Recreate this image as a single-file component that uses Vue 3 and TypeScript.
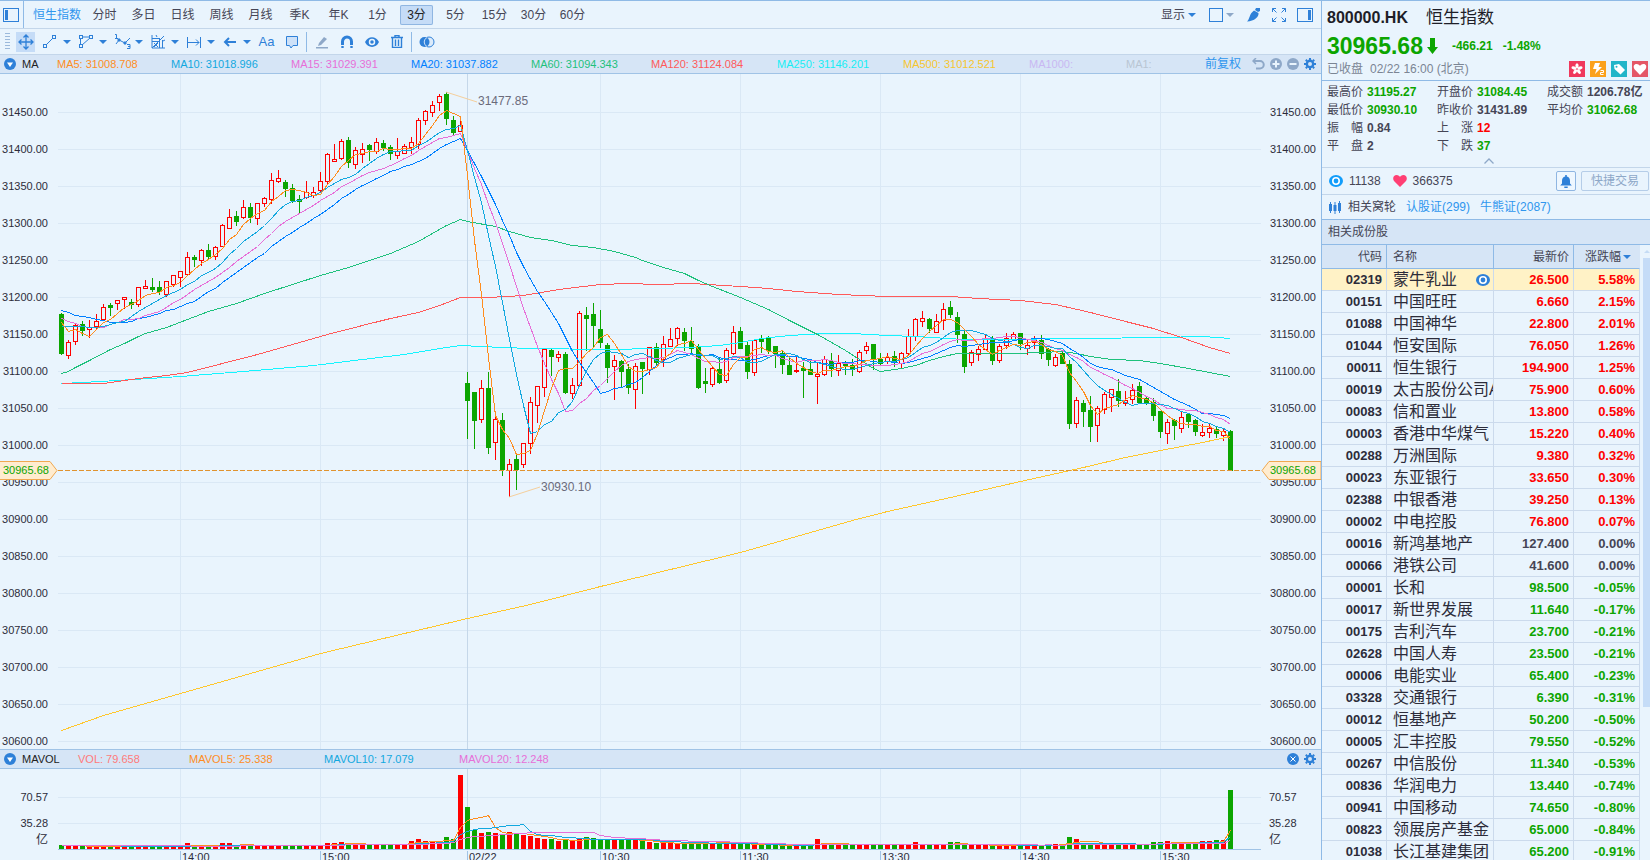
<script setup lang="ts">
import { computed, onBeforeUnmount, onMounted, ref } from 'vue'

type Dir = 'g' | 'r'
interface Candle { dir: Dir; top: number; bottom: number; high: number; low: number }

const periods = ['分时', '多日', '日线', '周线', '月线', '季K', '年K', '1分', '3分', '5分', '15分', '30分', '60分']
const activePeriod = ref('3分')

const maLabels = [
  { name: 'MA5', value: '31008.708', color: '#ff8d1e', size: 's' },
  { name: 'MA10', value: '31018.996', color: '#12a8df', size: 'm' },
  { name: 'MA15', value: '31029.391', color: '#e76fd8', size: 'm' },
  { name: 'MA20', value: '31037.882', color: '#007fff', size: 'm' },
  { name: 'MA60', value: '31094.343', color: '#1ec17c', size: 'm' },
  { name: 'MA120', value: '31124.084', color: '#ff5a5a', size: 'l' },
  { name: 'MA250', value: '31146.201', color: '#14eef5', size: 'l' },
  { name: 'MA500', value: '31012.521', color: '#f7c52e', size: 'l' },
  { name: 'MA1000', value: '', color: '#c9b8f2', size: 'n' },
  { name: 'MA1', value: '', color: '#b9c5d3', size: 'e' },
]
const volLabels = [
  { name: 'VOL', value: '79.658', color: '#ff7a7a', size: 's' },
  { name: 'MAVOL5', value: '25.338', color: '#ff8d1e', size: 'x' },
  { name: 'MAVOL10', value: '17.079', color: '#12a8df', size: 'x' },
  { name: 'MAVOL20', value: '12.248', color: '#e76fd8', size: 'x' },
]

const stats = [
  { label: '最高价', value: '31195.27', tone: 'down' },
  { label: '开盘价', value: '31084.45', tone: 'down' },
  { label: '成交额', value: '1206.78亿', tone: 'flat' },
  { label: '最低价', value: '30930.10', tone: 'down' },
  { label: '昨收价', value: '31431.89', tone: 'flat' },
  { label: '平均价', value: '31062.68', tone: 'down' },
  { label: '振幅', value: '0.84', tone: 'flat' },
  { label: '上涨', value: '12', tone: 'up' },
  { label: '', value: '', tone: 'flat' },
  { label: '平盘', value: '2', tone: 'flat' },
  { label: '下跌', value: '37', tone: 'down' },
]

const stocks = `02319 蒙牛乳业 26.500 5.58
00151 中国旺旺 6.660 2.15
01088 中国神华 22.800 2.01
01044 恒安国际 76.050 1.26
00011 恒生银行 194.900 1.25
00019 太古股份公司A 75.900 0.60
00083 信和置业 13.800 0.58
00003 香港中华煤气 15.220 0.40
00288 万洲国际 9.380 0.32
00023 东亚银行 33.650 0.30
02388 中银香港 39.250 0.13
00002 中电控股 76.800 0.07
00016 新鸿基地产 127.400 0.00
00066 港铁公司 41.600 0.00
00001 长和 98.500 -0.05
00017 新世界发展 11.640 -0.17
00175 吉利汽车 23.700 -0.21
02628 中国人寿 23.500 -0.21
00006 电能实业 65.400 -0.23
03328 交通银行 6.390 -0.31
00012 恒基地产 50.200 -0.50
00005 汇丰控股 79.550 -0.52
00267 中信股份 11.340 -0.53
00836 华润电力 13.440 -0.74
00941 中国移动 74.650 -0.80
00823 领展房产基金 65.000 -0.84
01038 长江基建集团 65.200 -0.91`.split('\n').map((line) => {
  const [code, name, price, change] = line.split(' ')
  const n = Number(change)
  return { code, name, price, change: change + '%', tone: n > 0 ? 'up' : n < 0 ? 'down' : 'flat' }
})

// Candles: direction, body top, body bottom, high, low. Levels count downwards, 2.22 per index point.
const candleText = `g 703 821 700 824;r 787 826 781 836;r 734 784 730 794;g 733 752 724 767;r 740 748 720 773;r 722 738 702 746
r 682 718 672 724;g 676 683 670 707;r 661 670 661 689;r 652 658 652 686;g 667 675 657 686;r 622 673 622 680
r 619 625 600 628;g 622 629 595 636;g 622 635 603 644;r 604 643 604 650;r 586 613 586 621;r 574 592 574 620
r 532 583 516 583;g 532 539 525 560;r 511 541 507 557;g 511 530 492 536;r 502 529 499 539;r 436 499 432 499
r 412 445 387 445;g 409 425 393 437;r 382 412 360 418;g 381 413 368 429;r 370 415 370 434;r 355 370 351 381
r 301 358 279 372;r 295 304 270 310;g 307 326 300 350;g 324 362 312 368;g 357 365 345 402;r 337 352 303 356
r 336 346 321 353;r 304 331 276 340;r 223 304 219 312;r 238 244 192 246;r 184 235 177 240;g 181 248 171 263
r 211 253 201 266;r 208 223 189 248;g 196 211 191 242;r 187 214 174 221;g 190 203 180 214;g 202 221 195 239
r 214 226 175 236;r 199 220 192 222;r 187 202 171 222;r 121 193 114 206;r 94 121 90 134;r 76 97 63 110
r 49 67 42 92;g 43 116 37 134;g 121 158 109 167;r 136 154 121 156;g 909 963 876 1077;g 936 1023 936 1106
r 925 1018 900 1028;g 924 1103 876 1121;r 1018 1087 1006 1140;g 1020 1171 1000 1187;r 1153 1169 1137 1252;g 1137 1170 1122 1230
r 1090 1153 1090 1163;r 967 1090 951 1122;r 919 976 919 1028;r 808 922 808 951;g 810 831 804 888;r 823 832 813 845
g 822 938 817 942;r 916 940 895 956;r 700 914 693 914;g 705 717 681 813;g 702 738 669 803;g 747 789 690 805
g 795 864 790 908;r 841 859 825 960;g 843 876 840 922;g 867 924 852 942;r 859 926 850 987;g 846 867 846 942
r 802 868 801 884;g 801 849 790 858;r 793 838 768 860;r 778 797 744 801;r 745 773 741 797;g 756 783 744 813
g 783 807 741 822;g 798 923 792 927;g 903 912 864 939;r 865 911 860 921;g 867 909 834 912;r 811 899 805 908
r 757 818 738 824;g 753 807 741 807;g 795 876 787 897;r 781 875 778 887;g 777 786 765 819;g 774 813 769 822
g 798 822 798 864;g 819 854 813 882;g 855 885 834 885;r 870 873 830 879;g 864 873 846 953;g 867 885 840 885
r 883 889 845 972;r 838 883 828 888;g 843 867 819 891;r 850 871 826 888;g 846 858 842 884;g 855 870 838 888
r 817 874 810 879;r 799 811 786 822;g 792 837 792 869;g 837 852 820 854;r 832 844 820 852;g 828 847 813 861
r 820 850 816 864;r 769 820 747 829;r 718 768 714 783;r 715 722 693 741;g 717 747 714 760;r 724 755 702 758
r 688 721 669 750;g 681 705 663 715;g 711 764 696 789;g 762 861 752 879;r 817 847 810 858;r 808 823 799 843
r 778 806 765 810;g 775 842 768 855;r 799 841 793 849;r 775 796 759 806;r 763 778 756 781;g 759 793 759 810
r 796 803 780 825;r 781 787 768 807;g 780 821 765 837;g 807 840 805 858;r 832 854 822 861;g 820 852 814 852
g 852 1031 840 1047;r 961 1028 951 1043;g 969 995 960 1041;g 990 1041 948 1086;r 985 1036 978 1086;r 943 986 936 1002
r 928 952 928 996;g 933 963 897 982;r 961 968 933 977;r 931 958 912 972;g 918 968 906 972;g 954 968 948 976
g 966 1007 954 1023;g 993 1056 993 1074;r 1027 1058 1018 1092;g 1020 1038 1017 1080;r 1012 1043 996 1059;g 1002 1026 1002 1043
g 1020 1056 1017 1067;r 1057 1064 1032 1071;r 1043 1055 1028 1073;g 1048 1061 1038 1073;r 1054 1064 1043 1083;g 1053 1173 1050 1173`
const candles: Candle[] = candleText.split(/[;\n]/).map((c) => {
  const [dir, top, bottom, high, low] = c.trim().split(' ')
  return { dir: dir as Dir, top: +top, bottom: +bottom, high: +high, low: +low }
})
const closes = candles.map((c) => (c.dir === 'r' ? c.top : c.bottom))

const volumes = `4 4 3 3 3 3 3 3 3 3 3 3 3 3 3 3 3 3 6 3 3 3 3 6 6 4 4 4 4 4 4 4 4 4 4 4 4 4 6 6 7 5 5 5 5 5 5 5 5 5 8 10 8 8 8 12 10 74
42 19 16 17 16 15 17 16 14 13 11 10 10 8 9 9 10 12 11 10 9 10 10 9 10 8 7 6 6 7 6 5 6 8 7 6 6 6 6 5 5 5 4 4 5 4 3 3 5 5 10 5 5 5 5 5 4 4 5 5
5 4 5 4 7 4 4 5 5 7 7 4 4 4 5 4 4 3 5 3 3 4 4 5 5 5 12 10 6 6 4 5 6 4 5 4 5 5 7 7 8 7 7 6 6 8 8 9 9 59`
  .split(/\s+/).map(Number)

function movingAverage(values: number[], n: number, lead: number[]): number[] {
  return values.map((_, i) =>
    i < n - 1 ? lead[Math.min(i, lead.length - 1)] : values.slice(i - n + 1, i + 1).reduce((a, b) => a + b, 0) / n)
}
const shortLines = [
  { color: '#007fff', v: movingAverage(closes, 20, [691, 697, 704, 707, 711, 716, 721, 725, 727, 727, 724, 715, 710, 704, 698, 691, 686, 679, 670]) },
  { color: '#e76fd8', v: movingAverage(closes, 15, [715, 723, 730, 737, 740, 741, 740, 732, 726, 718, 716, 713, 704, 699]) },
  { color: '#12a8df', v: movingAverage(closes, 10, [739, 739, 737, 739, 740, 740, 739, 731, 727]) },
  { color: '#ff8d1e', v: movingAverage(closes, 5, [727, 752, 746, 760]) },
]
// Slow averages as "index level" knots.
const slowLines = [
  { color: '#ffc72e', k: '0 1951 6 1904 17 1840 37 1720 58 1613 67 1572 77 1518 97 1415 113 1320 118 1292 127 1250 137 1202 146 1160 152 1132 157 1111 163 1085 167 1069' },
  { color: '#14f4ff', k: '0 910 3 907 8 900 17 887 26 872 36 854 43 837 49 821 54 803 57 796 63 801 67 805 78 806 85 805 90 802 94 796 97 786 100 774 104 766 109 758 113 758 118 764 122 769 129 776 133 777 146 775 157 770 163 769 167 773' },
  { color: '#ff5a5a', k: '0 908 3 908 5 910 6 910 9 901 11 894 15 884 18 875 23 850 28 823 33 793 38 763 43 736 47 715 51 695 54 675 57 652 61 652 66 645 71 626 77 613 81 610 85 612 90 610 97 617 101 624 105 632 111 641 118 647 122 647 127 647 131 654 137 661 142 673 147 697 152 723 156 743 160 772 164 801 167 820' },
  { color: '#1ec17c', k: '0 878 1 873 2 862 4 839 7 806 9 790 11 769 12 760 15 741 18 716 21 694 25 670 29 640 33 611 37 584 41 561 44 540 47 518 51 482 55 436 57 418 58 423 62 438 64 454 67 472 70 480 73 495 76 501 79 514 82 532 83 541 86 562 89 579 91 599 93 618 97 650 101 686 104 719 108 763 112 811 114 837 116 863 117 874 118 870 120 865 122 855 124 841 126 829 128 819 133 818 136 820 140 815 143 813 145 819 147 828 150 836 154 840 157 850 161 865 164 876 167 887' },
]
const volLines = [
  { color: '#ff8d1e', v: movingAverage(volumes, 5, [4]) },
  { color: '#12a8df', v: movingAverage(volumes, 10, [4]) },
  { color: '#e76fd8', v: movingAverage(volumes, 20, [4]) },
]

const priceTicks = Array.from({ length: 18 }, (_, i) => 31450 - i * 50)
const timeTicks = [
  { i: 17, t: '14:00' }, { i: 37, t: '15:00' }, { i: 58, t: '02/22', day: true }, { i: 77, t: '10:30' },
  { i: 97, t: '11:30' }, { i: 117, t: '13:30' }, { i: 137, t: '14:30' }, { i: 157, t: '15:30' },
]
const volTicks = [{ v: 52, t: '70.57' }, { v: 26, t: '35.28' }]

const plot = ref<HTMLElement | null>(null)
const W = ref(1321)
const H = ref(675)
let observer: ResizeObserver | undefined
function measure() {
  if (!plot.value) return
  W.value = plot.value.clientWidth
  H.value = plot.value.clientHeight
}
onMounted(() => {
  measure()
  observer = new ResizeObserver(measure)
  if (plot.value) observer.observe(plot.value)
})
onBeforeUnmount(() => observer?.disconnect())

const HEADROOM = 18
const LEVELS = 2025
const step = computed(() => (W.value - 152) / (candles.length - 1))
const cx = (i: number) => Math.round(61 + i * step.value)
const ly = (level: number) => Math.round(((level + HEADROOM) * H.value) / LEVELS)
const py = (price: number) => ly(97 + (31450 - price) * 2.22)
const right = computed(() => W.value - 60)
const last = computed(() => ly(1171))
const points = (values: number[]) => values.map((v, i) => `${cx(i) + 0.5},${ly(v) + 0.5}`).join(' ')
const knotPoints = (k: string) => {
  const n = k.split(' ').map(Number)
  const out: string[] = []
  for (let j = 0; j < n.length; j += 2) out.push(`${cx(n[j]) + 0.5},${ly(n[j + 1]) + 0.5}`)
  return out.join(' ')
}
const VOL_BASE = 80
const volPoints = (values: number[]) => values.map((v, i) => `${cx(i) + 0.5},${Math.round(VOL_BASE - v) + 0.5}`).join(' ')
</script>

<template>
  <div class="app">
    <main class="main">
      <nav class="tabs">
        <button class="icon-btn side-toggle" aria-label="侧栏">
          <svg width="16" height="14" viewBox="0 0 16 14"><rect x=".5" y=".5" width="15" height="13" fill="none" stroke="#2e80d8" /><rect x="2" y="2" width="3" height="10" fill="#2e80d8" /></svg>
        </button>
        <a href="#" class="index-link">恒生指数</a>
        <button v-for="p in periods" :key="p" class="period" :class="{ on: p === activePeriod }" @click="activePeriod = p">{{ p }}</button>
        <div class="tabs-right">
          <button class="menu-btn">显示<i class="caret"></i></button>
          <button class="menu-btn" aria-label="布局"><svg width="14" height="14" viewBox="0 0 14 14"><rect x=".5" y=".5" width="13" height="13" fill="none" stroke="#2e80d8" /></svg><i class="caret dim"></i></button>
          <button class="icon-btn" aria-label="画笔"><svg width="14" height="14" viewBox="0 0 14 14" fill="#2e80d8"><path d="M9 0h4v3l-2 1-3-2z" /><path d="M7 2.500l4.500 2.500c.5 4-4 8-11.500 8.500C3 11 2 6 7 2.500z" /></svg></button>
          <button class="icon-btn" aria-label="全屏"><svg width="14" height="14" viewBox="0 0 14 14" fill="none" stroke="#2e80d8"><path d="M.5 4V.5H4M.5.5l4 4M10 .5h3.500V4M13.500.5l-4 4M.5 10v3.500H4M.5 13.500l4-4M10 13.500h3.500V10M13.500 13.500l-4-4" /></svg></button>
          <button class="icon-btn" aria-label="右栏"><svg width="16" height="14" viewBox="0 0 16 14"><rect x=".5" y=".5" width="15" height="13" fill="none" stroke="#2e80d8" /><rect x="11" y="2" width="3" height="10" fill="#2e80d8" /></svg></button>
        </div>
      </nav>

      <div class="tools">
        <i class="grip"></i>
        <button class="tool on" aria-label="移动"><svg width="16" height="16" viewBox="0 0 16 16" fill="none" stroke="#2e80d8" stroke-width="1.300"><path d="M8 1v14M1 8h14M5.500 3.500L8 1l2.500 2.500M5.500 12.500L8 15l2.500-2.500M3.500 5.500L1 8l2.500 2.500M12.500 5.500L15 8l-2.500 2.500" /></svg></button>
        <button class="group" aria-label="线段"><svg width="16" height="16" viewBox="0 0 16 16" fill="none" stroke="#2e80d8"><path d="M4 11l7-7" /><rect x="1.500" y="10.500" width="3" height="3" /><rect x="10.500" y="1.500" width="3" height="3" /></svg><i class="caret"></i></button>
        <button class="group" aria-label="多边形"><svg width="16" height="16" viewBox="0 0 16 16" fill="none" stroke="#2e80d8"><path d="M4 3h8M2.500 5v6M4 11l8-7" /><rect x="1.500" y="1.500" width="3" height="3" /><rect x="11.500" y="1.500" width="3" height="3" /><rect x="1.500" y="10.500" width="3" height="3" /></svg><i class="caret"></i></button>
        <button class="group" aria-label="波浪"><svg width="18" height="17" viewBox="0 0 18 17" fill="none" stroke="#2e80d8"><path d="M1 1.500h1.500v4M1 5.500h3M2 11l3-4 6 3 5-5M13 11.500h3v4h-3M14 13.500h2" /><path d="M4 6h2v2H4zM10 9h2v2h-2z" fill="#2e80d8" /></svg><i class="caret"></i></button>
        <button class="group" aria-label="江恩"><svg width="16" height="16" viewBox="0 0 16 16" fill="none" stroke="#2e80d8"><path d="M2 1v13h13M2 4.500h8M2 7.500h8M9.500 14V4M12.500 14V6M2 14L14 2" /><path d="M6 1l1 2M15 6l-2 1M4 9l4 4M8 9l-4 4" /></svg><i class="caret"></i></button>
        <button class="group" aria-label="测量"><svg width="16" height="16" viewBox="0 0 16 16" fill="none" stroke="#2e80d8"><path d="M1.500 3v11M14.500 3v11M2 8.500h11M10 5.500l3 3-3 3" /></svg><i class="caret"></i></button>
        <button class="group" aria-label="箭头"><svg width="16" height="16" viewBox="0 0 16 16" fill="none" stroke="#2e80d8" stroke-width="2"><path d="M3 8h11M7 4L3 8l4 4" /></svg><i class="caret"></i></button>
        <button class="single text-tool">Aa</button>
        <button class="single" aria-label="注释"><svg width="14" height="14" viewBox="0 0 14 14" fill="#cde1f8" stroke="#2e80d8"><path d="M1.500 1.500h11v9H8l-2 2.500-1.500-2.500h-3z" /></svg></button>
        <i class="bar"></i>
        <button class="single" aria-label="铅笔"><svg width="14" height="14" viewBox="0 0 14 14" fill="#8ea8c8"><path d="M9 2l3 2-6 6-3 1 1-3zM1 12h12v1.500H1z" /></svg></button>
        <button class="single" aria-label="磁铁"><svg width="14" height="14" viewBox="0 0 14 14" fill="none" stroke="#2e80d8" stroke-width="3"><path d="M2.500 10V6.500a4.500 4.500 0 0 1 9 0V10" /><path d="M2.500 11v2M11.500 11v2" stroke-width="2.400" /></svg></button>
        <button class="single" aria-label="显示"><svg width="14" height="12" viewBox="0 0 14 12"><path d="M0 6c3-6.500 11-6.500 14 0-3 6.500-11 6.500-14 0z" fill="#2e80d8" /><circle cx="7" cy="6" r="2.500" fill="#2e80d8" stroke="#e9f4fd" stroke-width="1.500" /></svg></button>
        <button class="single" aria-label="删除"><svg width="12" height="13" viewBox="0 0 12 13" fill="none" stroke="#2e80d8"><path d="M0 2.500h12M4 2V.5h4V2M1.500 3v9.500h9V3M4.500 4.500V11M7.500 4.500V11" stroke-width="1.400" /></svg></button>
        <i class="bar"></i>
        <button class="single" aria-label="叠加"><svg width="16" height="12" viewBox="0 0 16 12"><circle cx="10" cy="6" r="5" fill="#dcebfa" stroke="#2e80d8" /><circle cx="5.500" cy="6" r="5" fill="#2e80d8" /><path d="M8 1.500a5 5 0 0 0 0 9" fill="none" stroke="#cde1f8" /></svg></button>
      </div>

      <header class="strip">
        <button class="round" aria-label="收起"><svg width="12" height="12" viewBox="0 0 12 12"><circle cx="6" cy="6" r="6" fill="#2e80d8" /><path d="M3 4.500h6L6 9z" fill="#fff" /></svg></button>
        <span class="strip-name">MA</span>
        <span v-for="m in maLabels" :key="m.name" class="ma" :class="'w-' + m.size" :style="{ color: m.color }">{{ m.name }}: {{ m.value }}</span>
        <div class="strip-right">
          <a href="#" class="adjust">前复权</a>
          <button class="round" aria-label="撤销"><svg width="13" height="12" viewBox="0 0 13 12" fill="none" stroke="#8ea8c8" stroke-width="2"><path d="M2 3h6a3.700 3.700 0 0 1 0 7.500H4" /><path d="M4 0L1 3l3 3" stroke-width="1.500" /></svg></button>
          <button class="round" aria-label="放大"><svg width="12" height="12" viewBox="0 0 12 12"><circle cx="6" cy="6" r="6" fill="#8ea8c8" /><path d="M6 2.500v7M2.500 6h7" stroke="#e9f4fd" stroke-width="2" /></svg></button>
          <button class="round" aria-label="缩小"><svg width="12" height="12" viewBox="0 0 12 12"><circle cx="6" cy="6" r="6" fill="#8ea8c8" /><path d="M2.500 6h7" stroke="#e9f4fd" stroke-width="2" /></svg></button>
          <button class="round" aria-label="设置"><svg width="12" height="12" viewBox="0 0 12 12"><circle cx="6" cy="6" r="3.200" fill="none" stroke="#2e80d8" stroke-width="2.400" /><path d="M6 0v2M6 10v2M0 6h2M10 6h2M1.800 1.800l1.400 1.400M8.800 8.800l1.400 1.400M10.200 1.800L8.800 3.200M3.200 8.800l-1.400 1.400" stroke="#2e80d8" stroke-width="2" /></svg></button>
        </div>
      </header>

      <div ref="plot" class="plot">
        <svg class="chart" :width="W" :height="H">
          <g shape-rendering="crispEdges">
            <line v-for="p in priceTicks" :key="'h' + p" class="grid" x1="58" :x2="right" :y1="py(p) + 0.5" :y2="py(p) + 0.5" />
            <line v-for="t in timeTicks" :key="'v' + t.i" class="grid" :class="{ day: t.day }" :x1="cx(t.i) + 0.5" :x2="cx(t.i) + 0.5" y1="0" :y2="H" />
          </g>
          <g shape-rendering="crispEdges">
            <g v-for="(c, i) in candles" :key="i" :class="c.dir">
              <line :x1="cx(i) + 0.5" :x2="cx(i) + 0.5" :y1="ly(c.high)" :y2="ly(c.low)" />
              <rect v-if="c.dir === 'g'" :x="cx(i) - 2" :y="ly(c.top)" width="5" :height="Math.max(2, ly(c.bottom) - ly(c.top))" />
              <rect v-else :x="cx(i) - 1.5" :y="ly(c.top) + 0.5" width="4" :height="Math.max(1, ly(c.bottom) - ly(c.top))" />
            </g>
          </g>
          <g fill="none" shape-rendering="crispEdges">
            <polyline v-for="l in slowLines" :key="l.color" :stroke="l.color" :points="knotPoints(l.k)" />
            <polyline v-for="l in shortLines" :key="l.color" :stroke="l.color" :points="points(l.v)" />
            <line class="last" x1="58" :x2="right" :y1="last + 0.5" :y2="last + 0.5" />
          </g>
          <g class="callout">
            <line :x1="cx(55)" :y1="ly(36)" :x2="cx(55) + 31" :y2="ly(66)" />
            <text :x="cx(55) + 32" :y="ly(62) + 4">31477.85</text>
            <line :x1="cx(64)" :y1="ly(1252)" :x2="cx(64) + 31" :y2="ly(1222)" />
            <text :x="cx(64) + 32" :y="ly(1220) + 4">30930.10</text>
          </g>
          <g class="axis">
            <text v-for="p in priceTicks" :key="'l' + p" x="48" :y="py(p) + 4" text-anchor="end">{{ p.toFixed(2) }}</text>
            <text v-for="p in priceTicks" :key="'r' + p" :x="W - 51" :y="py(p) + 4">{{ p.toFixed(2) }}</text>
          </g>
          <g class="tag">
            <path :d="`M-1 ${last - 8.5}H50L57 ${last + 0.5}L50 ${last + 9.5}H-1Z`" />
            <text x="3" :y="last + 4">30965.68</text>
            <path :d="`M${W} ${last - 8.5}H${W - 52}L${W - 59} ${last + 0.5}L${W - 52} ${last + 9.5}H${W}Z`" />
            <text :x="W - 51" :y="last + 4">30965.68</text>
          </g>
        </svg>
      </div>

      <header class="strip vol-strip">
        <button class="round" aria-label="收起"><svg width="12" height="12" viewBox="0 0 12 12"><circle cx="6" cy="6" r="6" fill="#2e80d8" /><path d="M3 4.500h6L6 9z" fill="#fff" /></svg></button>
        <span class="strip-name wide">MAVOL</span>
        <span v-for="m in volLabels" :key="m.name" class="ma" :class="'w-' + m.size" :style="{ color: m.color }">{{ m.name }}: {{ m.value }}</span>
        <div class="strip-right">
          <button class="round" aria-label="关闭"><svg width="12" height="12" viewBox="0 0 12 12"><circle cx="6" cy="6" r="6" fill="#2e80d8" /><path d="M3.500 3.500l5 5M8.500 3.500l-5 5" stroke="#fff" /></svg></button>
          <button class="round" aria-label="设置"><svg width="12" height="12" viewBox="0 0 12 12"><circle cx="6" cy="6" r="3.200" fill="none" stroke="#2e80d8" stroke-width="2.400" /><path d="M6 0v2M6 10v2M0 6h2M10 6h2M1.800 1.800l1.400 1.400M8.800 8.800l1.400 1.400M10.200 1.800L8.800 3.200M3.200 8.800l-1.400 1.400" stroke="#2e80d8" stroke-width="2" /></svg></button>
        </div>
      </header>

      <div class="volume">
        <svg class="chart" :width="W" height="91">
          <g shape-rendering="crispEdges">
            <line v-for="t in volTicks" :key="t.t" class="grid" x1="58" :x2="right" :y1="VOL_BASE - t.v + 0.5" :y2="VOL_BASE - t.v + 0.5" />
            <line v-for="t in timeTicks" :key="'v' + t.i" class="grid" :class="{ day: t.day }" :x1="cx(t.i) + 0.5" :x2="cx(t.i) + 0.5" y1="0" :y2="VOL_BASE" />
            <rect v-for="(v, i) in volumes" :key="i" :fill="candles[i].dir === 'g' ? '#0ca500' : '#ff0000'" :x="cx(i) - 2" :y="VOL_BASE - v" width="5" :height="v" />
            <polyline v-for="l in volLines" :key="l.color" fill="none" :stroke="l.color" :points="volPoints(l.v)" />
            <line class="base" x1="58" :x2="right" :y1="VOL_BASE + 0.5" :y2="VOL_BASE + 0.5" />
            <line v-for="t in timeTicks" :key="'t' + t.i" class="base" :x1="cx(t.i) + 0.5" :x2="cx(t.i) + 0.5" y1="82" y2="91" />
          </g>
          <g class="axis">
            <text v-for="t in volTicks" :key="'a' + t.t" x="48" :y="VOL_BASE - t.v + 4" text-anchor="end">{{ t.t }}</text>
            <text v-for="t in volTicks" :key="'b' + t.t" :x="W - 52" :y="VOL_BASE - t.v + 4">{{ t.t }}</text>
            <text class="unit" x="48" y="75" text-anchor="end">亿</text>
            <text class="unit" :x="W - 52" y="75">亿</text>
            <text v-for="t in timeTicks" :key="'c' + t.i" class="time" :x="cx(t.i) + 2" y="92">{{ t.t }}</text>
          </g>
        </svg>
      </div>
    </main>

    <aside class="side">
      <section class="quote">
        <h1><b>800000.HK</b><span>恒生指数</span></h1>
        <div class="price down">
          <strong>30965.68</strong>
          <svg width="11" height="16" viewBox="0 0 11 16" fill="#0ca500"><path d="M3 0h5v9h3l-5.500 7L0 9h3z" /></svg>
          <b>-466.21</b><b>-1.48%</b>
        </div>
        <div class="status">
          <span>已收盘</span><span>02/22 16:00 (北京)</span>
          <div class="badges">
            <svg width="16" height="16" viewBox="0 0 16 16"><rect width="16" height="16" fill="#f0385c" /><g fill="#fff"><ellipse cx="8" cy="4.800" rx="1.600" ry="2.600" /><ellipse cx="8" cy="4.800" rx="1.600" ry="2.600" transform="rotate(72 8 8)" /><ellipse cx="8" cy="4.800" rx="1.600" ry="2.600" transform="rotate(144 8 8)" /><ellipse cx="8" cy="4.800" rx="1.600" ry="2.600" transform="rotate(216 8 8)" /><ellipse cx="8" cy="4.800" rx="1.600" ry="2.600" transform="rotate(288 8 8)" /></g></svg>
            <svg width="16" height="16" viewBox="0 0 16 16"><rect width="16" height="16" fill="#fba11b" /><path d="M5 2h5L8.500 6H12l-7 7 1.500-5H3z" fill="#fff" /><path d="M10.500 9.500h3v2h-3v2h3" fill="none" stroke="#fff" /></svg>
            <svg width="16" height="16" viewBox="0 0 16 16"><rect width="16" height="16" fill="#22b5c8" /><path d="M3 4l5-1 6 6-4.500 4.500L3.500 8z" fill="#fff" /><circle cx="5.500" cy="5.700" r="1" fill="#22b5c8" /></svg>
            <svg width="16" height="16" viewBox="0 0 16 16"><rect width="16" height="16" fill="#e45766" /><path d="M8 14L2.500 8.200C.8 5.500 2 3 4.500 3 6.500 3 7.500 4 8 5c.5-1 1.500-2 3.500-2C14 3 15.200 5.500 13.500 8.200z" fill="#fff" /></svg>
          </div>
        </div>
      </section>

      <section class="stats">
        <dl>
          <div v-for="(s, i) in stats" :key="i"><dt><span v-for="(ch, j) in s.label" :key="j">{{ ch }}</span></dt><dd :class="s.tone">{{ s.value }}</dd></div>
        </dl>
        <button class="fold" aria-label="折叠"><svg width="10" height="6" viewBox="0 0 10 6" fill="none" stroke="#8ea8c8" stroke-width="1.300"><path d="M.5 5.500L5 1l4.500 4.500" /></svg></button>
      </section>

      <section class="line social">
        <svg width="14" height="12" viewBox="0 0 14 12"><ellipse cx="7" cy="6" rx="7" ry="6" fill="#119dfb" /><circle cx="7" cy="6" r="3.200" fill="#119dfb" stroke="#fff" stroke-width="1.600" /></svg>
        <span>11138</span>
        <svg width="14" height="12" viewBox="0 0 14 12"><path d="M7 12L1 6C-1 3 1 0 3.500 0 5.500 0 6.500 1 7 2c.5-1 1.500-2 3.500-2C13 0 15 3 13 6z" fill="#ff3f74" /></svg>
        <span>366375</span>
        <button class="bell" aria-label="提醒"><svg width="12" height="13" viewBox="0 0 12 13" fill="#2e80d8"><path d="M5.200 0h1.600v1.500C9 2 10 3.500 10 6v2.500l1.800 2H.2l1.800-2V6c0-2.500 1-4 3.200-4.500zM4.300 11.500h3.400V13H4.300z" /></svg></button>
        <button class="trade">快捷交易</button>
      </section>

      <section class="line warrants">
        <svg width="12" height="13" viewBox="0 0 12 13" fill="#2e80d8"><path d="M0 3h3v7H0zM1 1h1v11H1zM4.500 4h3v6h-3zM5.500 1h1v12h-1zM9 2h3v8H9zM10 0h1v12h-1z" /></svg>
        <span>相关窝轮</span><a href="#">认股证(299)</a><a href="#">牛熊证(2087)</a>
      </section>

      <h2>相关成份股</h2>
      <div class="list">
        <table>
          <colgroup><col class="c-code" /><col class="c-name" /><col class="c-price" /><col /></colgroup>
          <thead><tr><th>代码</th><th class="left">名称</th><th>最新价</th><th>涨跌幅<i class="caret"></i></th></tr></thead>
          <tbody>
            <tr v-for="(s, i) in stocks" :key="s.code" :class="{ hot: i === 0 }">
              <td class="code">{{ s.code }}</td>
              <td class="name"><div>{{ s.name }}<svg v-if="i === 0" width="14" height="12" viewBox="0 0 14 12"><ellipse cx="7" cy="6" rx="7" ry="6" fill="#2e80d8" /><circle cx="7" cy="6" r="3.200" fill="#2e80d8" stroke="#fff" stroke-width="1.600" /></svg></div></td>
              <td :class="s.tone">{{ s.price }}</td>
              <td :class="s.tone">{{ s.change }}</td>
            </tr>
          </tbody>
        </table>
        <div class="scroll"><i class="up-arrow"></i><div class="thumb"></div></div>
      </div>
    </aside>
  </div>
</template>

<style>
body { margin: 0; background: #e9f4fd; }
</style>

<style scoped>
.app { display: flex; height: 100vh; overflow: hidden; box-sizing: border-box; border-top: 1px solid #8fbae6; background: #e9f4fd; color: #454555; font: 12px/18px "Liberation Sans", "Noto Sans CJK SC", sans-serif; }
button { border: 0; padding: 0; margin: 0; background: none; font: inherit; color: inherit; display: inline-flex; align-items: center; justify-content: center; }
a { color: #2f96ee; text-decoration: none; }
svg { display: block; flex: none; }
.main { flex: 1; min-width: 0; display: flex; flex-direction: column; }
.caret { border: 4px solid transparent; border-top-color: #2e80d8; border-bottom: 0; flex: none; }
.caret.dim { border-top-color: #8ea8c8; }

.tabs { display: flex; align-items: center; height: 27px; border-bottom: 1px solid #c3d6ea; flex: none; }
.side-toggle { width: 24px; height: 27px; border-right: 1px solid #8fbae6; padding-right: 2px; box-sizing: border-box; }
.index-link { margin: 0 4px 0 9px; }
.period { width: 39px; height: 20px; white-space: nowrap; }
.period.on { background: #c5dcf7; box-shadow: inset 0 0 0 1px #8fb6e2; border-radius: 2px; width: 33px; margin: 0 3px; color: #222; }
.tabs-right { margin-left: auto; display: flex; align-items: center; gap: 11px; padding-right: 8px; }
.menu-btn { gap: 3px; margin-right: 2px; }
.icon-btn { flex: none; }

.tools { display: flex; align-items: center; height: 25px; border-bottom: 1px solid #c3d6ea; flex: none; }
.grip { width: 5px; height: 17px; margin: 0 6px 0 5px; background: repeating-linear-gradient(#9bb9db 0 1px, transparent 1px 3px); }
.tool { width: 19px; height: 20px; margin-right: 6px; }
.tool.on { background: #c5dcf7; }
.group { width: 36px; justify-content: space-between; padding: 0 6px 0 1px; box-sizing: border-box; }
.single { width: 25px; }
.text-tool { color: #2e80d8; font-size: 13px; margin-left: -3px; }
.bar { width: 1px; height: 20px; background: #8fbae6; margin: 0 2px; }

.strip { display: flex; align-items: center; height: 18px; padding: 0 5px 0 4px; background: #d6e5f6; border-bottom: 1px solid #a0c3e6; font-size: 11px; flex: none; white-space: nowrap; overflow: hidden; }
.strip-name { width: 41px; padding-left: 6px; box-sizing: border-box; flex: none; color: #222; }
.strip-name.wide { width: 62px; }
.w-s { width: 114px; }
.w-m { width: 120px; }
.w-l { width: 126px; }
.w-x { width: 135px; }
.w-n { width: 97px; }
.w-e { width: 48px; }
.vol-strip .w-s { width: 111px; }
.ma { flex: none; }
.strip-right { margin-left: auto; display: flex; align-items: center; gap: 5px; }
.adjust { font-size: 12px; margin-right: 6px; }
.vol-strip { border-top: 1px solid #a0c3e6; }

.plot { flex: 1; min-height: 0; overflow: hidden; }
.volume { height: 91px; flex: none; overflow: hidden; }
.grid { stroke: #dae8f5; }
.grid.day { stroke: #c5d7e9; }
.g line { stroke: #0ca500; }
.g rect { fill: #0ca500; }
.r line { stroke: #f00; }
.r rect { stroke: #f00; fill: #e9f4fd; }
.last { stroke: #e0932f; stroke-dasharray: 5 2; }
.base { stroke: #a0c3e6; }
.callout line { stroke: #f5cf9c; }
.callout text { font-size: 12px; fill: #6b6b7b; }
.axis text { font-size: 11px; fill: #2c2c3a; }
.axis .unit { font-size: 12px; }
.tag path { fill: #ffeccf; stroke: #f0a850; }
.tag text { font-size: 11px; fill: #0ca500; }

.side { width: 329px; flex: none; border-left: 1px solid #8fbae6; display: flex; flex-direction: column; box-sizing: border-box; overflow: hidden; }
.up { color: #f00; }
.down { color: #0ca500; }
.flat { color: #454555; }
.quote { height: 80px; border-bottom: 1px solid #8fbae6; padding: 5px 2px 0 5px; box-sizing: border-box; flex: none; }
h1 { margin: 0; font-size: 16px; line-height: 24px; font-weight: 400; color: #1e1e28; display: flex; gap: 18px; }
h1 span { font-size: 17px; }
.price { display: flex; align-items: center; line-height: 30px; height: 30px; padding-top: 1px; }
.price strong { font-size: 23px; margin-right: 4px; }
.price b { margin-left: 14px; }
.price b + b { margin-left: 10px; }
.status { display: flex; align-items: center; gap: 7px; color: #7b8594; line-height: 16px; }
.badges { margin-left: auto; display: flex; gap: 5px; }
.stats { border-bottom: 1px solid #c3d6ea; padding: 2px 0 0 5px; height: 87px; box-sizing: border-box; flex: none; }
dl { margin: 0; display: grid; grid-template-columns: 110px 110px 1fr; }
dl div { display: flex; gap: 4px; height: 18px; white-space: nowrap; }
dt { width: 36px; display: flex; justify-content: space-between; flex: none; }
dd { margin: 0; font-weight: 700; }
.fold { display: flex; margin: 3px auto 0; height: 6px; }
.line { display: flex; align-items: center; height: 26px; border-bottom: 1px solid #c3d6ea; padding-left: 7px; flex: none; }
.social svg + span { margin: 0 12px 0 6px; }
.social .bell { margin-left: auto; width: 20px; height: 20px; border: 1px solid #8fb6e2; border-radius: 2px; margin-right: 5px; box-sizing: border-box; background: #eef7ff; }
.trade { width: 68px; height: 20px; border: 1px solid #b5cde8; border-radius: 2px; box-sizing: border-box; color: #8ea8c8; margin-right: 1px; }
.warrants { height: 24px; border-bottom-color: #8fbae6; gap: 10px; }
.warrants svg + span { margin-left: -3px; }
h2 { margin: 0; height: 24px; line-height: 24px; padding-left: 6px; background: #d6e5f6; border-bottom: 1px solid #8fbae6; font-size: 12px; font-weight: 400; flex: none; }
.list { flex: 1; min-height: 0; display: flex; overflow: hidden; }
table { width: calc(100% - 10px); table-layout: fixed; border-collapse: separate; border-spacing: 0; align-self: flex-start; }
.c-code { width: 65px; }
.c-name { width: 107px; }
.c-price { width: 80px; }
th { height: 23px; padding: 0 4px; background: #d6e5f6; border-right: 1px solid #8fbae6; border-bottom: 1px solid #8fbae6; font-weight: 400; text-align: right; line-height: 18px; white-space: nowrap; }
th:last-child { border-right-color: #d6e5f6; padding-right: 8px; }
th .caret { display: inline-block; vertical-align: 2px; margin-left: 2px; }
th.left { text-align: left; padding-left: 6px; }
td { height: 21px; padding: 0 4px; border-right: 1px solid #cbdaec; border-bottom: 1px solid #cbdaec; text-align: right; font: 700 13px/21px "Liberation Sans", sans-serif; }
td.code { color: #2c2c3a; }
td.name { padding: 0 0 0 6px; text-align: left; }
td.name div { font: 400 16px/21px "Liberation Sans", "Noto Sans CJK SC", sans-serif; color: #2c2c3a; height: 21px; overflow: hidden; white-space: nowrap; display: flex; align-items: center; justify-content: space-between; padding-right: 3px; }
td.name div:not(:has(svg)) { display: block; padding-right: 0; }
.hot td { background: #fff2c6; }
.scroll { width: 7px; margin-left: 3px; flex: none; display: flex; flex-direction: column; align-items: center; }
.up-arrow { border: 3px solid transparent; border-bottom-color: #c5dcf5; border-top: 0; margin: 5px 0; }
.thumb { align-self: stretch; height: 73%; background: #c5dcf7; }
</style>
